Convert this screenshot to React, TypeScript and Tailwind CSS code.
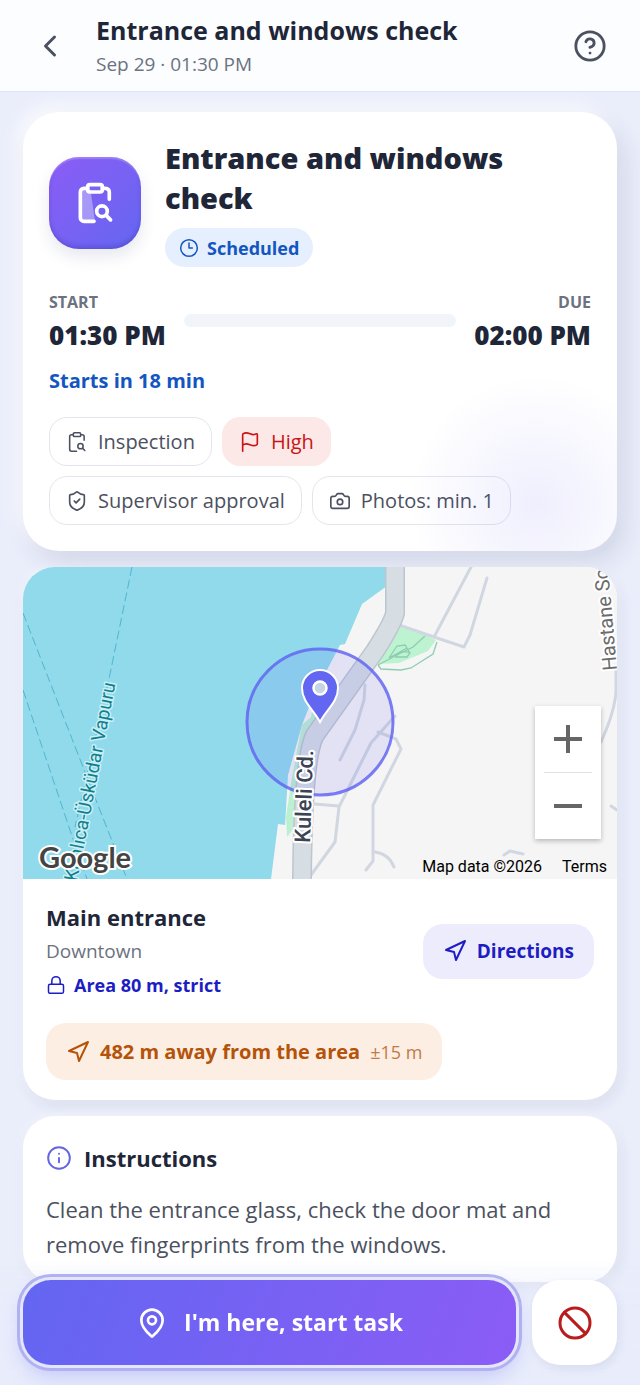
import type { ReactNode } from 'react';
import { Ban, Camera, ChevronLeft, CircleQuestionMark, Clock3, Flag, Info, Lock, MapPin, Navigation, ShieldCheck } from 'lucide-react';

const cardShadow = 'shadow-[3px_6px_14px_rgba(30,41,90,0.09),0_0_10px_rgba(255,255,255,0.7)]';

function ClipboardSearch({ className, shaded = false }: { className?: string; shaded?: boolean }) {
  return (
    <svg
      className={className}
      viewBox="0 0 24 24"
      fill="none"
      stroke="currentColor"
      strokeWidth={shaded ? 2 : 1.7}
      strokeLinecap="round"
      strokeLinejoin="round"
      aria-hidden="true"
    >
      {shaded && <path d="M4 4.5h5.500l2.500 17.500H4z" fill="currentColor" fillOpacity="0.35" stroke="none" />}
      <path d="M8 4H6a2 2 0 0 0-2 2v14a2 2 0 0 0 2 2h5.500" />
      <path d="M16 4h1.800a2 2 0 0 1 2 2v4" />
      <rect x="8" y="2" width="8" height="4" rx="1.200" />
      <circle cx="15.800" cy="16.500" r="2.900" />
      <path d="m18.200 18.900 2.300 2.300" />
    </svg>
  );
}

function Tag({ children, danger = false }: { children: ReactNode; danger?: boolean }) {
  return (
    <li
      className={`flex h-[49px] items-center gap-2.5 rounded-[18px] border px-4 text-xl font-medium ${
        danger ? 'border-[#fde8e8] bg-[#fde8e8] text-[#c81414]' : 'border-[#e2e6ec] text-[#4b5160]'
      }`}
    >
      {children}
    </li>
  );
}

function Header() {
  return (
    <header className="flex h-[92px] items-center gap-5 border-b border-[#dfe4f3] bg-[#fbfdff] px-6">
      <button type="button" aria-label="Back" className="flex size-[52px] items-center justify-center text-[#4b5160]">
        <ChevronLeft className="size-9" />
      </button>
      <div className="min-w-0 flex-1">
        <h1 className="truncate text-[25px] leading-9 font-bold text-[#1e2638]">Entrance and windows check</h1>
        <p className="text-[19px] leading-8 text-[#6b7280]">Sep 29 · 01:30 PM</p>
      </div>
      <button type="button" aria-label="Help" className="flex size-[52px] items-center justify-center text-[#4b5160]">
        <CircleQuestionMark className="size-[34px]" />
      </button>
    </header>
  );
}

function TaskCard() {
  return (
    <section className="relative overflow-hidden rounded-[36px] bg-white p-[26px] shadow-[8px_12px_24px_rgba(30,41,90,0.12),-6px_-6px_18px_rgba(255,255,255,0.8)]">
      {/* soft glow in the corner */}
      <div className="pointer-events-none absolute -right-12 -bottom-20 size-64 rounded-full bg-[radial-gradient(closest-side,rgba(99,91,240,0.1),transparent)]" />

      <div className="flex items-center gap-6">
        <div className="flex size-[92px] shrink-0 items-center justify-center rounded-[30px] bg-linear-to-br from-[#8b5cf6] to-[#6366f1] text-white shadow-[0_8px_16px_rgba(30,41,90,0.1),inset_0_2px_1px_rgba(255,255,255,0.2),inset_0_-3px_4px_rgba(30,20,120,0.2)]">
          <ClipboardSearch shaded className="size-11" />
        </div>
        <div className="min-w-0 flex-1">
          <h2 className="text-[29px] leading-10 font-extrabold text-[#1e2638]">Entrance and windows check</h2>
          <p className="mt-2.5 inline-flex h-[39px] items-center gap-2 rounded-full bg-[#e5effd] px-3.5 align-top text-lg font-bold text-[#1456c0]">
            <Clock3 className="size-5" strokeWidth={1.8} />
            Scheduled
          </p>
        </div>
      </div>

      <div className="mt-5 flex items-center gap-[18px]">
        <div>
          <p className="text-base leading-[30px] font-bold text-[#6b7280]">START</p>
          <p className="text-[26px] leading-9 font-extrabold text-[#1e2638]">01:30 PM</p>
        </div>
        <div className="h-[13px] flex-1 rounded-full bg-[#f1f4f9]" />
        <div className="text-right">
          <p className="text-base leading-[30px] font-bold text-[#6b7280]">DUE</p>
          <p className="text-[26px] leading-9 font-extrabold text-[#1e2638]">02:00 PM</p>
        </div>
      </div>

      <p className="mt-3 text-xl leading-8 font-bold text-[#1456c0]">Starts in 18 min</p>

      <ul className="mt-5 flex flex-wrap gap-2.5">
        <Tag>
          <ClipboardSearch className="size-[22px]" />
          Inspection
        </Tag>
        <Tag danger>
          <Flag className="size-[22px]" strokeWidth={1.8} />
          High
        </Tag>
        <Tag>
          <ShieldCheck className="size-[22px]" strokeWidth={1.8} />
          Supervisor approval
        </Tag>
        <Tag>
          <Camera className="size-[22px]" strokeWidth={1.8} />
          Photos: min. 1
        </Tag>
      </ul>
    </section>
  );
}

function AreaMap() {
  return (
    <div className="relative h-[312px] overflow-hidden bg-[#f5f5f5] font-[Roboto,sans-serif]">
      <svg
        viewBox="0 0 594 312"
        preserveAspectRatio="xMidYMid slice"
        className="block size-full"
        role="img"
        aria-label="Map of the task area"
      >
        <rect width="594" height="312" fill="#f5f5f5" />
        <path d="M0 0H364V19L339 37 322 77 317 78 290 130 279 158 265 208 262 258 255 257 248 312H0Z" fill="#90daec" />
        <path d="M279 158 288 150 291 134 299 148 281 178 278 210 272 260 264 270 263 250 269 210Z" fill="#bdf0d0" />

        {/* ferry lines */}
        <g fill="none" stroke="#50b5ce" strokeWidth="1" strokeDasharray="9 4">
          <path d="M109 0 86 112 52 260" />
          <path d="M0 46 60 200 104 312" />
          <path d="M0 123 50 272 64 312" />
        </g>

        {/* park */}
        <path d="M379 58 413 73 405 84 376 96 355 97 358 88Z" fill="#bdf3d1" />
        <path
          d="M355 98 358 102 378 103 388 101 410 87 414 75M402 69 390 80 374 88 355 98M366 91 374 79 382 78 387 86 384 90 373 90Q376 82 387 86M366 91 384 81"
          fill="none"
          stroke="#8dcdb0"
          strokeWidth="1.300"
        />

        {/* side streets */}
        <g fill="none" stroke="#d1d7e0" strokeWidth="3" strokeLinejoin="round" strokeLinecap="round">
          <path d="M376 58 411 70 441 80 447 68 464 11" />
          <path d="M411 70 448 0" />
          <path d="M342 118 341 133 332 163 317 193" />
          <path d="M372 149 355 168 348 176 316 240 312 275 288 308" />
          <path d="M355 165 373 172 378 182 350 238V294L343 303" />
          <path d="M352 285Q366 287 371 300" />
          <path d="M291 237 316 239" />
          <path d="M593 100V124Q592 144 578 175" />
          <path d="M588 239 594 243" />
          <path d="M481 288 487 284 500 287" />
        </g>

        {/* Kuleli Cd. */}
        <path d="M372 0V46Q370 56 352 84L292 168Q280 190 279 312" fill="none" stroke="#bdc5ce" strokeWidth="20" />
        <path d="M372 0V46Q370 56 352 84L292 168Q280 190 279 312" fill="none" stroke="#d6dde3" strokeWidth="17" />

        <circle cx="297" cy="155" r="73" fill="#6366f1" fillOpacity="0.13" stroke="#6366f1" strokeOpacity="0.85" strokeWidth="3" />

        <g strokeLinejoin="round" paintOrder="stroke">
          <text transform="translate(54 315) rotate(-79)" fontSize="19" fill="#127f8e" stroke="#c9f0f7" strokeWidth="3">
            Kanlıca-Üsküdar Vapuru
          </text>
          <text
            transform="translate(287 276) rotate(-88)"
            fontSize="22"
            fontWeight="500"
            fill="#3b4454"
            stroke="#fff"
            strokeWidth="4"
          >
            Kuleli Cd.
          </text>
          <text transform="translate(594 103) rotate(-95)" fontSize="20" fill="#6b6b6b" stroke="#fff" strokeWidth="4">
            Hastane So
          </text>
        </g>

        <path
          d="M297 155C291 143 279 135 279 121a18 18 0 0 1 36 0C315 135 303 143 297 155Z"
          fill="#6366f1"
          stroke="#fff"
          strokeWidth="2"
        />
        <circle cx="297" cy="121" r="6.500" fill="#c6d4e4" stroke="#fff" strokeWidth="2.500" />
      </svg>

      <span className="absolute bottom-1 left-4 font-[Lato,sans-serif] text-[29px] leading-9 font-bold text-[#444] [-webkit-text-stroke:4px_white] [paint-order:stroke_fill]">
        Google
      </span>

      <div className="absolute right-4 bottom-10 flex w-[66px] flex-col items-center bg-white text-[#666] shadow-[0_2px_5px_rgba(0,0,0,0.25)]">
        <button type="button" aria-label="Zoom in" className="flex h-[66px] w-full items-center justify-center">
          <svg viewBox="0 0 28 28" className="size-7" stroke="currentColor" strokeWidth="4">
            <path d="M0 14H28M14 0V28" />
          </svg>
        </button>
        <span className="h-px w-12 bg-[#e2e2e2]" />
        <button type="button" aria-label="Zoom out" className="flex h-[66px] w-full items-center justify-center">
          <svg viewBox="0 0 28 28" className="size-7" stroke="currentColor" strokeWidth="4">
            <path d="M0 14H28" />
          </svg>
        </button>
      </div>

      <div className="absolute right-2.5 bottom-0 flex gap-5 text-base leading-6 text-black">
        <span>Map data ©2026</span>
        <a href="#terms">Terms</a>
      </div>
    </div>
  );
}

function LocationCard() {
  return (
    <section className={`overflow-hidden rounded-[32px] bg-white ${cardShadow}`}>
      <AreaMap />
      <div className="px-[23px] py-5">
        <div className="flex items-center justify-between gap-4">
          <div>
            <h3 className="text-[22px] leading-9 font-bold text-[#1e2638]">Main entrance</h3>
            <p className="text-[19px] leading-8 text-[#6b7280]">Downtown</p>
            <p className="flex items-center gap-2 text-lg leading-9 font-bold text-[#1d1dc4]">
              <Lock className="size-5" strokeWidth={1.8} />
              Area 80 m, strict
            </p>
          </div>
          <a
            href="#directions"
            className="flex h-[55px] items-center gap-2.5 rounded-[20px] bg-[#edecfc] px-5 text-[19px] font-bold text-[#1d1dc4]"
          >
            <Navigation className="size-6" />
            Directions
          </a>
        </div>
        <p className="mt-5 inline-flex h-[57px] items-center gap-2.5 rounded-[20px] bg-[#fceee3] px-5 align-top text-xl font-bold text-[#b45309]">
          <Navigation className="size-6" />
          482 m away from the area
          <span className="text-lg font-normal text-[#c27a49]">±15 m</span>
        </p>
      </div>
    </section>
  );
}

function Instructions() {
  return (
    <section className={`rounded-[32px] bg-white px-[23px] pt-6 pb-5 ${cardShadow}`}>
      <h3 className="flex items-center gap-3 text-[22px] leading-9 font-bold text-[#1e2638]">
        <Info className="size-[26px] text-[#6366e0]" strokeWidth={1.8} />
        Instructions
      </h3>
      <p className="mt-4 text-[22px] leading-[35px] text-[#4b5160]">
        Clean the entrance glass, check the door mat and remove fingerprints from the windows.
      </p>
    </section>
  );
}

function ActionBar() {
  return (
    <footer className="fixed inset-x-0 bottom-0 flex gap-4 bg-linear-to-b from-transparent via-[#e8ecfb]/80 via-40% to-[#e8ecfb] px-[23px] py-5">
      <button
        type="button"
        className="flex h-[85px] flex-1 items-center justify-center gap-4 rounded-[28px] bg-linear-[110deg] from-[#6366f1] to-[#8b5cf6] text-[23px] font-bold text-white shadow-[0_0_0_3px_#e3e6fc,0_0_0_6px_#b1b0f1,0_10px_20px_rgba(99,102,241,0.3)]"
      >
        <MapPin className="size-8" />
        I'm here, start task
      </button>
      <button
        type="button"
        aria-label="Cancel task"
        className="flex h-[85px] w-[85px] items-center justify-center rounded-[28px] bg-white text-[#b91c1c] shadow-[2px_4px_10px_rgba(30,41,90,0.08)]"
      >
        <Ban className="size-9" />
      </button>
    </footer>
  );
}

export default function App() {
  return (
    <div className="min-h-screen bg-[#eaeefb] font-['Open_Sans','Noto_Sans',sans-serif]">
      <Header />
      <main className="flex flex-col gap-4 px-[23px] pt-5 pb-[102px]">
        <TaskCard />
        <LocationCard />
        <Instructions />
      </main>
      <ActionBar />
    </div>
  );
}
